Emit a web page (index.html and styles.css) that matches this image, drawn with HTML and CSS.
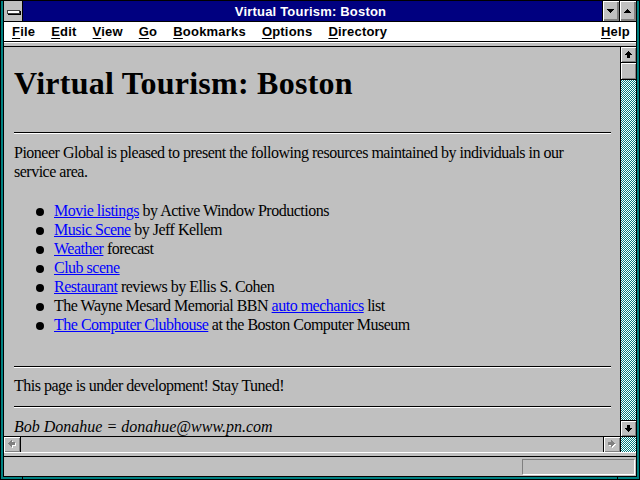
FILE: index.html
```html
<!DOCTYPE html>
<html>
<head>
<meta charset="utf-8">
<title>Virtual Tourism: Boston</title>
<link rel="stylesheet" href="styles.css">
</head>
<body>
<div class="window">
  <div class="inner">
    <div class="titlebar">
      <div class="sysmenu"><span class="sysbar"></span></div>
      <div class="title">Virtual Tourism: Boston</div>
      <div class="tbtn"><svg width="7" height="4" viewBox="0 0 7 4"><path d="M0 0h7v1h-1v1h-1v1h-1v1h-1v-1h-1v-1h-1v-1h-1z"/></svg></div>
      <div class="tbtn"><svg width="7" height="4" viewBox="0 0 7 4"><path d="M0 4h7v-1h-1v-1h-1v-1h-1v-1h-1v1h-1v1h-1v1h-1z"/></svg></div>
    </div>
    <div class="menubar">
      <span class="menu"><u>F</u>ile</span>
      <span class="menu"><u>E</u>dit</span>
      <span class="menu"><u>V</u>iew</span>
      <span class="menu"><u>G</u>o</span>
      <span class="menu"><u>B</u>ookmarks</span>
      <span class="menu"><u>O</u>ptions</span>
      <span class="menu"><u>D</u>irectory</span>
      <span class="menu help"><u>H</u>elp</span>
    </div>
    <div class="sep"></div>
    <div class="main">
      <div class="content">
        <h1>Virtual Tourism: Boston</h1>
        <hr>
        <p class="intro">Pioneer Global is pleased to present the following resources maintained by individuals in our service area.</p>
        <ul>
          <li><a href="#">Movie listings</a> by Active Window Productions</li>
          <li><a href="#">Music Scene</a> by Jeff Kellem</li>
          <li><a href="#">Weather</a> forecast</li>
          <li><a href="#">Club scene</a></li>
          <li><a href="#">Restaurant</a> reviews by Ellis S. Cohen</li>
          <li>The Wayne Mesard Memorial BBN <a href="#">auto mechanics</a> list</li>
          <li><a href="#">The Computer Clubhouse</a> at the Boston Computer Museum</li>
        </ul>
        <hr class="hr2">
        <p class="dev">This page is under development! Stay Tuned!</p>
        <hr class="hr3">
        <address>Bob Donahue = donahue@www.pn.com</address>
      </div>
      <div class="vscroll">
        <div class="sbtn up"><svg width="7" height="7" viewBox="0 0 7 7"><path d="M3 0h1v1h1v1h1v1h1v1h-2v3h-3v-3h-2v-1h1v-1h1v-1h1z"/></svg></div>
        <div class="thumb"></div>
        <div class="sbtn down"><svg width="7" height="7" viewBox="0 0 7 7"><path transform="rotate(180 3.5 3.5)" d="M3 0h1v1h1v1h1v1h1v1h-2v3h-3v-3h-2v-1h1v-1h1v-1h1z"/></svg></div>
      </div>
      <div class="hscroll">
        <div class="sbtn left dis"><svg width="9" height="9" viewBox="0 0 9 9"><path class="hl" transform="translate(1 1) rotate(-90 3.5 3.5)" d="M3 0h1v1h1v1h1v1h1v1h-2v3h-3v-3h-2v-1h1v-1h1v-1h1z"/><path class="gr" transform="rotate(-90 3.5 3.5)" d="M3 0h1v1h1v1h1v1h1v1h-2v3h-3v-3h-2v-1h1v-1h1v-1h1z"/></svg></div>
        <div class="htrack"></div>
        <div class="sbtn right dis"><svg width="9" height="9" viewBox="0 0 9 9"><path class="hl" transform="translate(1 1) rotate(90 3.5 3.5)" d="M3 0h1v1h1v1h1v1h1v1h-2v3h-3v-3h-2v-1h1v-1h1v-1h1z"/><path class="gr" transform="rotate(90 3.5 3.5)" d="M3 0h1v1h1v1h1v1h1v1h-2v3h-3v-3h-2v-1h1v-1h1v-1h1z"/></svg></div>
      </div>
      <div class="corner"></div>
    </div>
    <div class="sep"></div>
    <div class="status"><div class="statbox"></div></div>
  </div>
</div>
</body>
</html>
```

FILE: styles.css
```css
* { box-sizing: border-box; }
html, body { margin: 0; padding: 0; }
body { width: 640px; height: 480px; overflow: hidden; background: #008080; }

.window {
  position: relative;
  width: 640px;
  height: 480px;
  border: 1px solid #000;
  background: #008080;
  padding: 0 2px 2px;
}
.window::before, .window::after {
  content: "";
  position: absolute;
  bottom: -1px;
  width: 1px;
  height: 4px;
  background: #000;
}
.window::before { left: 21px; }
.window::after { right: 21px; }

.inner {
  height: 100%;
  border: 1px solid #000;
  border-top: 0;
  background: #c0c0c0;
  display: flex;
  flex-direction: column;
}

/* title bar */
.titlebar {
  flex: none;
  height: 21px;
  display: flex;
  background: #000080;
  border-bottom: 1px solid #000;
}
.sysmenu {
  width: 19px;
  background: #c0c0c0;
  border-right: 1px solid #000;
  display: flex;
  align-items: center;
  justify-content: center;
}
.sysbar {
  width: 13px;
  height: 4px;
  background: #fff;
  border: 1px solid #404040;
  box-shadow: 1px 1px 0 #000;
  margin-top: 1px;
}
.title {
  flex: 1;
  color: #fff;
  font: bold 13px/18px "Liberation Sans", Arial, sans-serif;
  letter-spacing: 0.2px;
  text-align: center;
  padding: 2px 4px 0 0;
}
.tbtn {
  width: 17px;
  border-left: 1px solid #000;
  background: #c0c0c0;
  box-shadow: inset 1px 1px 0 #fff, inset -1px -1px 0 #808080, inset -2px -2px 0 #808080;
  display: flex;
  align-items: center;
  justify-content: center;
}
.tbtn svg { display: block; shape-rendering: crispEdges; fill: #000; margin: 0 1px 1px 0; }

/* menu bar */
.menubar {
  flex: none;
  height: 20px;
  display: flex;
  background: #fff;
  border-bottom: 1px solid #000;
  font: bold 13px/18px "Liberation Sans", Arial, sans-serif;
  color: #000;
  padding-top: 1px;
}
.menu { padding: 0 8px; letter-spacing: 0.2px; }
.menu u { text-decoration-thickness: 1px; text-underline-offset: 2px; }
.help { margin-left: auto; padding-right: 6px; }

.sep {
  flex: none;
  height: 5px;
  background: #c0c0c0;
  border-top: 1px solid #fff;
  border-bottom: 1px solid #000;
}

/* main view */
.main {
  flex: 1;
  min-height: 0;
  display: grid;
  grid-template-columns: 1fr 16px;
  grid-template-rows: 1fr 16px;
}
.content {
  overflow: hidden;
  padding: 0 9px 0 10px;
  font-family: "Liberation Serif", "Times New Roman", serif;
  font-size: 16px;
  line-height: 19px;
  color: #000;
  letter-spacing: -0.5px;
}
.content h1 {
  margin: 18px 0 0;
  font-size: 32px;
  line-height: 36px;
  font-weight: bold;
  letter-spacing: 0.25px;
}
.content hr {
  margin: 31px 0 0;
  height: 2px;
  border: 0;
  border-top: 1px solid #000;
  border-bottom: 1px solid #fff;
}
.intro { margin: 9px 0 0; max-width: 590px; }
.content ul { margin: 20px 0 0; padding: 0 0 0 40px; }
.content li { list-style: none; }
.content li::before {
  content: "";
  display: inline-block;
  width: 8px;
  height: 8px;
  border-radius: 50%;
  background: #000;
  margin: 0 10px 0 -18px;
}
.content a { color: #0000ff; text-decoration: underline; }
.content .hr2 { margin-top: 32px; }
.dev { margin: 8px 0 0; }
.content .hr3 { margin-top: 11px; }
.content address { margin-top: 9px; font-style: italic; letter-spacing: 0; }

/* scrollbars */
.vscroll {
  border-left: 1px solid #000;
  display: flex;
  flex-direction: column;
  background-color: #fff;
  background-image: repeating-conic-gradient(#008080 0 25%, #fff 0 50%);
  background-size: 2px 2px;
}
.sbtn {
  flex: none;
  background: #c0c0c0;
  box-shadow: inset 1px 1px 0 #fff, inset -1px -1px 0 #808080;
  display: flex;
  align-items: center;
  justify-content: center;
}
.sbtn svg { display: block; shape-rendering: crispEdges; fill: #000; }
.up { height: 16px; border-bottom: 1px solid #000; }
.thumb {
  flex: none;
  height: 17px;
  background: #c0c0c0;
  border-bottom: 1px solid #000;
  box-shadow: inset 1px 1px 0 #fff, inset -1px -1px 0 #808080;
}
.down { height: 16px; border-top: 1px solid #000; margin-top: auto; }

.hscroll {
  border-top: 1px solid #000;
  display: flex;
  background: #c0c0c0;
}
.left { width: 17px; border-right: 1px solid #000; }
.right { width: 17px; border-left: 1px solid #000; }
.htrack { flex: 1; }
.dis .gr { fill: #808080; }
.dis .hl { fill: #fff; }
.corner {
  border-top: 1px solid #000;
  border-left: 1px solid #000;
  background-color: #fff;
  background-image: repeating-conic-gradient(#008080 0 25%, #fff 0 50%);
  background-size: 2px 2px;
}

/* status bar */
.status {
  flex: none;
  height: 19px;
  display: flex;
  justify-content: flex-end;
  padding: 2px 1px 0 0;
}
.statbox {
  width: 113px;
  height: 16px;
  border-top: 1px solid #808080;
  border-left: 1px solid #808080;
  border-bottom: 1px solid #fff;
  border-right: 1px solid #fff;
}
```
